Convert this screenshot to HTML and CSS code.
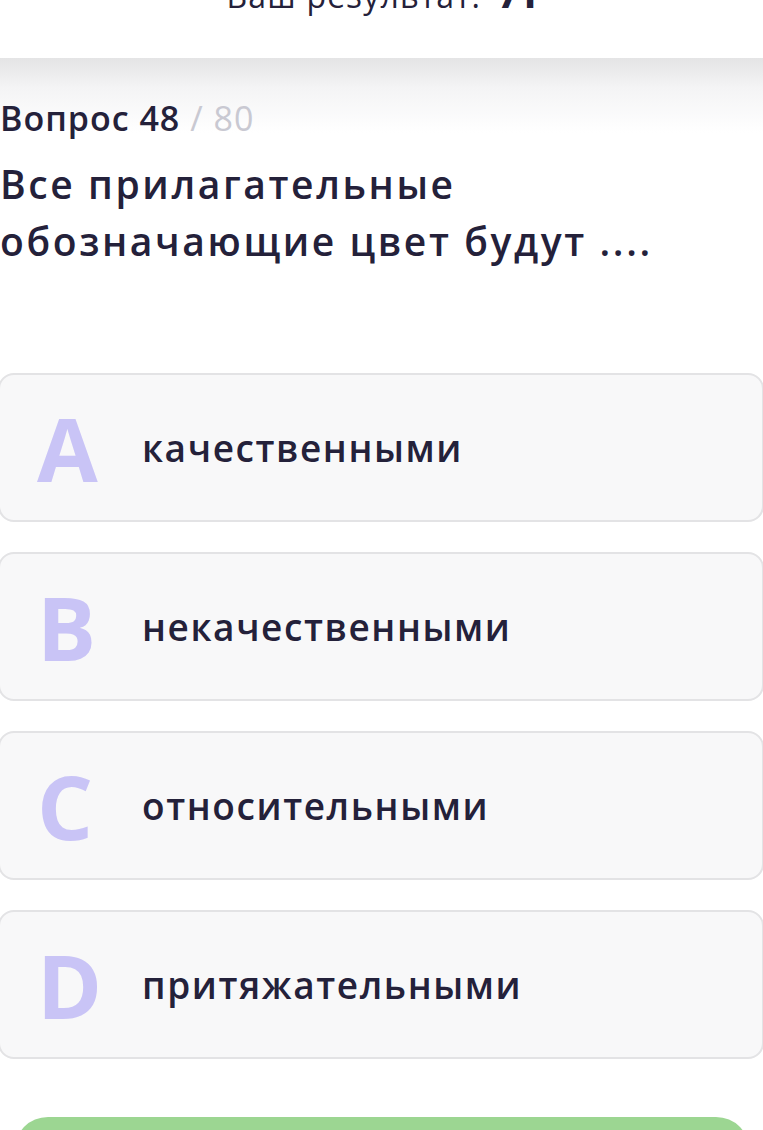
FILE: index.html
```html
<!DOCTYPE html>
<html lang="ru">
<head>
    <meta charset="UTF-8">
    <meta name="viewport" content="width=device-width, initial-scale=1.0">
    <title>Тест</title>
    <link rel="stylesheet" href="styles.css">
</head>
<body>
<div class="result-bar">
    <div class="result-text">Ваш результат: <b>71</b></div>
</div>
<div class="quiz">
    <div class="counter">Вопрос 48 <span class="total">/ 80</span></div>
    <h2 class="question">Все прилагательные обозначающие цвет будут ....</h2>
    <ul class="answers">
        <li class="answer"><span class="letter">A</span><span class="answer-text">качественными</span></li>
        <li class="answer"><span class="letter">B</span><span class="answer-text">некачественными</span></li>
        <li class="answer"><span class="letter">C</span><span class="answer-text">относительными</span></li>
        <li class="answer"><span class="letter">D</span><span class="answer-text">притяжательными</span></li>
    </ul>
    <button class="next-btn" type="button"></button>
</div>
</body>
</html>
```

FILE: styles.css
```css
body {
    margin: 0;
    background-color: #ffffff;
    font-family: 'Open Sans', 'Noto Sans', Arial, sans-serif;
    color: #24213a;
    overflow: hidden;
}
.result-bar {
    height: 58px;
    overflow: hidden;
    background-color: #ffffff;
}
.result-text {
    margin-top: -24px;
    text-align: center;
    font-size: 32px;
    font-weight: 500;
    line-height: 40px;
    letter-spacing: 1.2px;
    padding-left: 2px;
}
.result-text b {
    font-weight: 800;
    margin-left: 8px;
}
.quiz {
    background: linear-gradient(#e4e4e5 0, #f4f4f5 30px, #ffffff 75px);
    padding-top: 40px;
}
.counter {
    font-size: 34px;
    font-weight: 600;
    line-height: 40px;
    letter-spacing: 1px;
}
.counter .total {
    color: #c9c9d2;
    font-weight: 500;
}
.question {
    margin: 17px 0 0;
    font-size: 39px;
    font-weight: 600;
    line-height: 57px;
    letter-spacing: 2.6px;
    max-width: 700px;
}
.answers {
    list-style: none;
    margin: 104px 0 0;
    padding: 0;
    display: flex;
    flex-direction: column;
    gap: 30px;
}
.answer {
    margin: 0 -1px 0 -2px;
    height: 145px;
    display: flex;
    align-items: center;
    background-color: #f8f8f9;
    border: 2px solid #e3e3e5;
    border-radius: 16px;
}
.letter {
    width: 142px;
    padding-left: 37px;
    box-sizing: border-box;
    font-size: 88px;
    font-weight: 700;
    color: #c9c4f6;
    line-height: 1;
    letter-spacing: 2px;
}
.answer-text {
    font-size: 37px;
    font-weight: 600;
    letter-spacing: 1.6px;
}
.next-btn {
    display: block;
    margin: 58px auto 0;
    width: 736px;
    height: 80px;
    border: none;
    border-radius: 34px;
    background-color: #9cd692;
}
```
